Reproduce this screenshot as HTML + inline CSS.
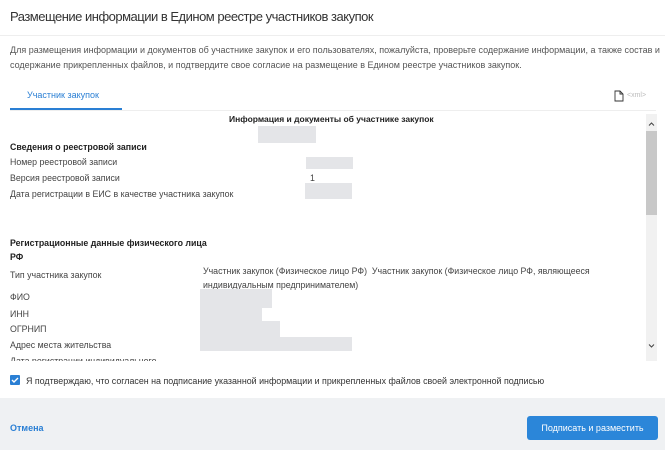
<!DOCTYPE html>
<html><head><meta charset="utf-8"><style>
*{margin:0;padding:0;box-sizing:border-box}
body{width:665px;height:450px;overflow:hidden;background:#fff;font-family:"Liberation Sans",sans-serif;color:#333;position:relative}
.a{position:absolute;white-space:nowrap}
.s{font-size:8.8px;color:#444}
.b{font-weight:bold;color:#222}
.blur{position:absolute;background:#e4e5e8}
</style></head><body>
<div class="a" style="left:10px;top:9px;font-size:13px;letter-spacing:-0.5px;color:#333">Размещение информации в Едином реестре участников закупок</div>
<div class="a" style="left:0;top:35px;width:665px;height:1px;background:#eee"></div>
<div class="a" style="left:10px;top:43px;line-height:15px;font-size:9px;color:#555">Для размещения информации и документов об участнике закупок и его пользователях, пожалуйста, проверьте содержание информации, а также состав и<br>содержание прикрепленных файлов, и подтвердите свое согласие на размещение в Едином реестре участников закупок.</div>
<div class="a" style="left:27px;top:90px;font-size:9px;color:#2a7fd4">Участник закупок</div>
<div class="a" style="left:10px;top:108px;width:112px;height:2px;background:#2a7fd4"></div>
<div class="a" style="left:10px;top:110px;width:646px;height:1px;background:#eee"></div>
<svg class="a" style="left:613px;top:90px" width="12" height="12"><path d="M2 1h5l3 3v7H2z M7 1v3h3" fill="none" stroke="#333" stroke-width="0.9"/></svg>
<div class="a" style="left:627px;top:92px;font-size:7px;color:#bbb">&lt;xml&gt;</div>
<div class="a" style="left:646px;top:114px;width:11px;height:247px;background:#f1f1f1"></div>
<div class="a" style="left:646px;top:131px;width:11px;height:84px;background:#c8c8c8"></div>
<svg class="a" style="left:646px;top:120px" width="11" height="8"><path d="M3 5.5l2.5-2.5 2.5 2.5" fill="none" stroke="#444" stroke-width="1"/></svg>
<svg class="a" style="left:646px;top:342px" width="11" height="8"><path d="M3 2.5l2.5 2.5 2.5-2.5" fill="none" stroke="#444" stroke-width="1"/></svg>
<div class="a b" style="left:229px;top:114px;font-size:8.5px">Информация и документы об участнике закупок</div>
<div class="blur" style="left:258px;top:126px;width:58px;height:17px"></div>
<div class="a s b" style="left:10px;top:142px">Сведения о реестровой записи</div>
<div class="a s" style="left:10px;top:157px">Номер реестровой записи</div>
<div class="blur" style="left:306px;top:157px;width:47px;height:12px"></div>
<div class="a s" style="left:10px;top:173px">Версия реестровой записи</div>
<div class="a s" style="left:310px;top:173px">1</div>
<div class="a s" style="left:10px;top:189px">Дата регистрации в ЕИС в качестве участника закупок</div>
<div class="blur" style="left:305px;top:183px;width:47px;height:16px"></div>
<div class="a s b" style="left:10px;top:236px;line-height:14px">Регистрационные данные физического лица<br>РФ</div>
<div class="a s" style="left:10px;top:270px">Тип участника закупок</div>
<div class="a s" style="left:203px;top:264px;line-height:14px">Участник закупок (Физическое лицо РФ)&nbsp; Участник закупок (Физическое лицо РФ, являющееся<br>индивидуальным предпринимателем)</div>
<div class="a s" style="left:10px;top:292px">ФИО</div>
<div class="blur" style="left:200px;top:289px;width:72px;height:19px"></div>
<div class="a s" style="left:10px;top:309px">ИНН</div>
<div class="blur" style="left:200px;top:308px;width:62px;height:13px"></div>
<div class="a s" style="left:10px;top:324px">ОГРНИП</div>
<div class="blur" style="left:200px;top:321px;width:80px;height:16px"></div>
<div class="a s" style="left:10px;top:340px">Адрес места жительства</div>
<div class="blur" style="left:200px;top:337px;width:152px;height:14px"></div>
<div class="a" style="left:10px;top:355px;height:6px;overflow:hidden;font-size:8.8px;color:#444;line-height:12px">Дата регистрации индивидуального</div>
<div class="a" style="left:10px;top:375px;width:10px;height:10px;background:#2a7fd4;border-radius:1px"></div>
<svg class="a" style="left:10px;top:375px" width="10" height="10"><path d="M2 5l2 2 4-4" fill="none" stroke="#fff" stroke-width="1.4"/></svg>
<div class="a" style="left:26px;top:376px;font-size:8.9px;color:#333">Я подтверждаю, что согласен на подписание указанной информации и прикрепленных файлов своей электронной подписью</div>
<div class="a" style="left:0;top:398px;width:665px;height:52px;background:#eff1f3"></div>
<div class="a" style="left:10px;top:423px;font-size:9px;font-weight:bold;color:#2a7fd4">Отмена</div>
<div class="a" style="left:527px;top:416px;width:131px;height:24px;background:#2b86d9;border-radius:3px;color:#fff;font-size:9px;text-align:center;line-height:24px">Подписать и разместить</div>
</body></html>
